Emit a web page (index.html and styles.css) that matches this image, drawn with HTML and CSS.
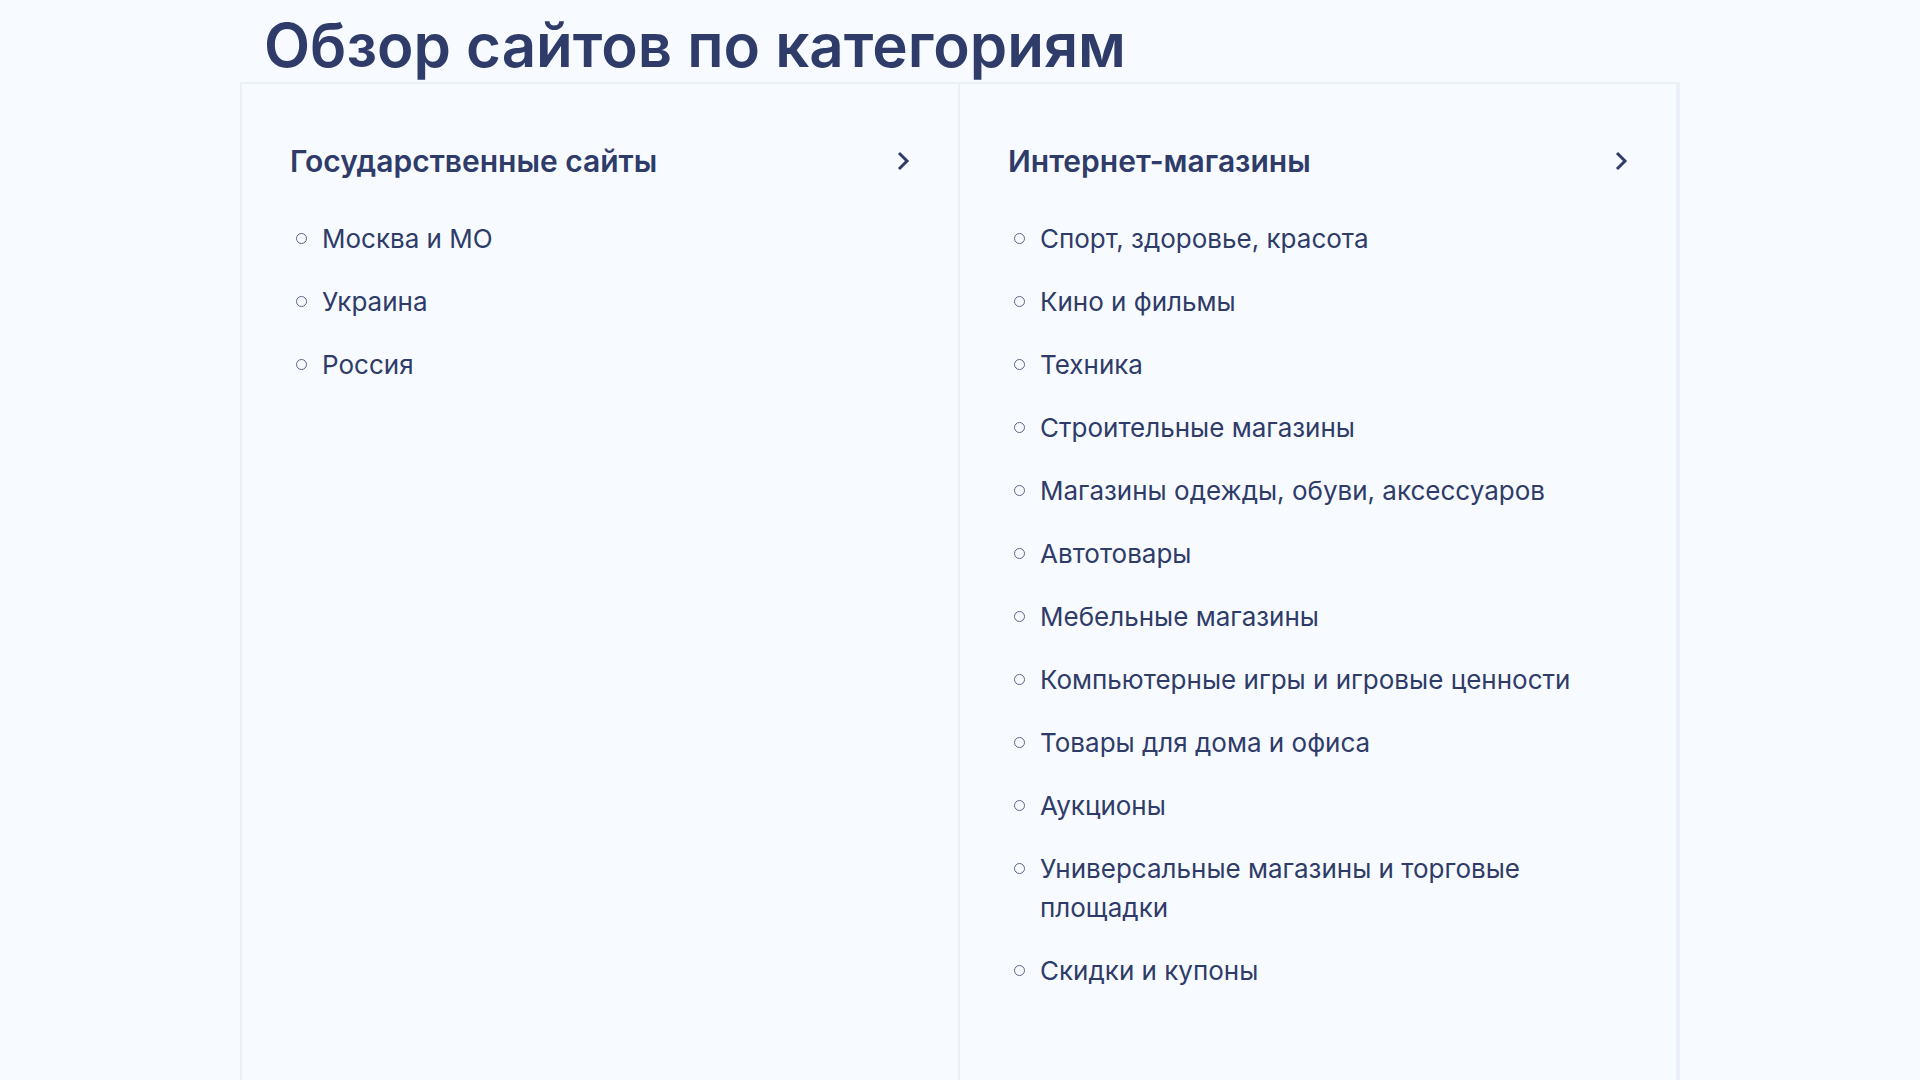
FILE: index.html
```html
<!DOCTYPE html>
<html lang="ru">
<head>
<meta charset="utf-8">
<meta name="viewport" content="width=device-width, initial-scale=1">
<title>Обзор сайтов по категориям</title>
<link rel="stylesheet" href="styles.css">
</head>
<body>
<main class="container">
  <h1 class="title">Обзор сайтов по категориям</h1>
  <div class="categories">
    <section class="category">
      <h2 class="category-title"><a href="#gov">Государственные сайты
        <svg class="chevron" viewBox="0 0 12 20" aria-hidden="true"><path d="M1 2l8 8-8 8"/></svg></a></h2>
      <ul class="links">
        <li><a href="#">Москва и МО</a></li>
        <li><a href="#">Украина</a></li>
        <li><a href="#">Россия</a></li>
      </ul>
    </section>
    <section class="category">
      <h2 class="category-title"><a href="#shops">Интернет-магазины
        <svg class="chevron" viewBox="0 0 12 20" aria-hidden="true"><path d="M1 2l8 8-8 8"/></svg></a></h2>
      <ul class="links">
        <li><a href="#">Спорт, здоровье, красота</a></li>
        <li><a href="#">Кино и фильмы</a></li>
        <li><a href="#">Техника</a></li>
        <li><a href="#">Строительные магазины</a></li>
        <li><a href="#">Магазины одежды, обуви, аксессуаров</a></li>
        <li><a href="#">Автотовары</a></li>
        <li><a href="#">Мебельные магазины</a></li>
        <li><a href="#">Компьютерные игры и игровые ценности</a></li>
        <li><a href="#">Товары для дома и офиса</a></li>
        <li><a href="#">Аукционы</a></li>
        <li><a href="#">Универсальные магазины и торговые площадки</a></li>
        <li><a href="#">Скидки и купоны</a></li>
      </ul>
    </section>
  </div>
</main>
</body>
</html>
```
FILE: styles.css
```css
*,
*::before {
  box-sizing: border-box;
}

body {
  margin: 0;
  background: #f7fbff;
  color: #2f3c69;
  font-family: Inter, "Liberation Sans", sans-serif;
}

a {
  color: inherit;
  text-decoration: none;
}

.container {
  max-width: 1440px;
  margin: 0 auto;
}

.title {
  margin: 0;
  padding: 9px 24px 1px;
  font-size: 60px;
  font-weight: 600;
  line-height: 72px;
}

.categories {
  display: grid;
  grid-template-columns: 1fr 1fr;
  min-height: 100vh;
  border: 2px solid #e9f0f8;
}

.category {
  padding: 53px 48px 48px;
  border-right: 2px solid #e9f0f8;
}

.category-title {
  margin: 0 0 34px;
  font-size: 30px;
  font-weight: 600;
  line-height: 48px;
}

.category-title a {
  display: flex;
  align-items: center;
  justify-content: space-between;
}

.chevron {
  width: 12px;
  height: 20px;
  overflow: visible;
  fill: none;
  stroke: currentColor;
  stroke-width: 3;
}

.links {
  margin: 0;
  padding: 0;
  list-style: none;
}

.links li {
  display: flex;
  gap: 15px;
  margin-bottom: 24px;
  font-size: 26px;
  line-height: 39px;
}

.links li::before {
  content: "";
  flex: none;
  width: 11px;
  height: 11px;
  margin: 14px 0 0 6px;
  border: 1px solid #5a6588;
  border-radius: 50%;
}
```
